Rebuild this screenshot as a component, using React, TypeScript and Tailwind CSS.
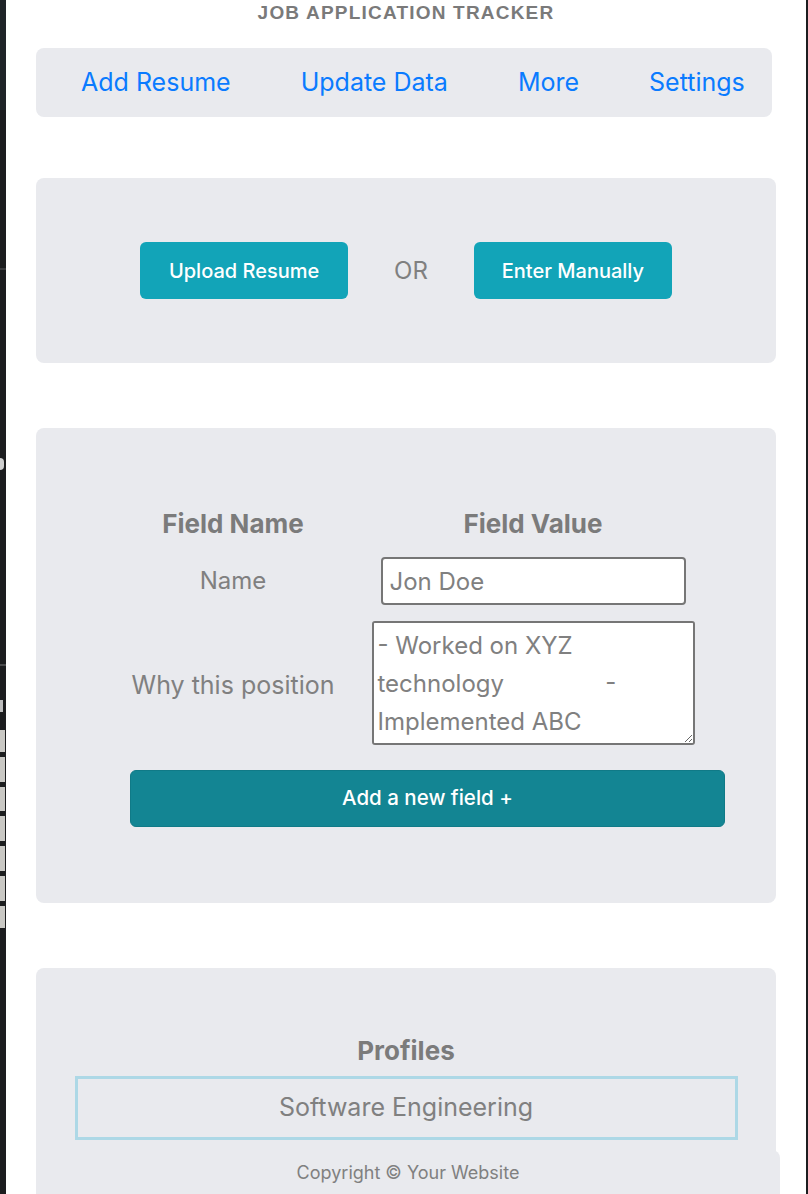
import { useState } from 'react'

/**
 * Job application tracker popup.
 *
 * Nav links on top, a resume entry choice, the field table and the profile list.
 * The footer sits fixed at the bottom of the popup.
 */

const font = { fontFamily: 'Inter, "Noto Sans", sans-serif' }

function NavBar() {
  const links = ['Add Resume', 'Update Data', 'More', 'Settings']
  return (
    <nav className="mt-[22px] flex h-[69px] w-[736px] items-center gap-[70px] rounded-lg bg-[#e9eaee] pl-[45px]">
      {links.map((l) => (
        <a key={l} href="#" className="text-[25px] leading-none text-[#0a7bff]">
          {l}
        </a>
      ))}
    </nav>
  )
}

function ResumeChoice() {
  return (
    <section className="mt-[61px] flex h-[185px] w-[740px] items-center justify-center rounded-lg bg-[#e9eaee]">
      <button
        type="button"
        className="h-[57px] w-[208px] rounded-md bg-[#12a4b8] text-[20px] font-medium text-white"
      >
        Upload Resume
      </button>
      <span className="mx-[46px] text-[24px] text-[#808080]">OR</span>
      <button
        type="button"
        className="h-[57px] w-[198px] rounded-md bg-[#12a4b8] text-[20px] font-medium text-white"
      >
        Enter Manually
      </button>
    </section>
  )
}

function FieldTable() {
  const [name, setName] = useState('Jon Doe')
  const [why, setWhy] = useState(
    '- Worked on XYZ technology               - Implemented ABC'
  )
  return (
    <section className="mt-[65px] w-[740px] rounded-lg bg-[#e9eaee] pb-[76px] pt-[75px]">
      <div className="ml-[94px] grid w-[600px] grid-cols-[206px_394px] items-center">
        <div className="flex h-[40px] items-center justify-center text-[26px] font-bold text-[#7b7b7b]">
          Field Name
        </div>
        <div className="flex h-[40px] items-center justify-center text-[26px] font-bold text-[#7b7b7b]">
          Field Value
        </div>

        <div className="mt-[14px] text-center text-[24px] text-[#808080]">Name</div>
        <div className="mt-[14px] flex justify-center">
          <input
            value={name}
            onChange={(e) => setName(e.target.value)}
            className="h-[48px] w-[305px] rounded-[4px] border-2 border-[#767676] bg-white px-[7px] text-[24px] text-[#808080] outline-none"
            style={font}
          />
        </div>

        <div className="mt-[22px] text-center text-[25px] text-[#808080]">Why this position</div>
        <div className="mt-[16px] flex justify-center">
          <textarea
            value={why}
            onChange={(e) => setWhy(e.target.value)}
            className="h-[124px] w-[323px] rounded-[3px] border-2 border-[#767676] bg-white px-[4px] py-[4px] text-[24px] leading-[38px] text-[#808080] outline-none"
            style={font}
          />
        </div>
      </div>
      <button
        type="button"
        className="ml-[94px] mt-[25px] h-[57px] w-[595px] rounded-md border border-[#107a87] bg-[#138593] text-[20.5px] font-medium text-white"
      >
        Add a new field +
      </button>
    </section>
  )
}

function Profiles() {
  return (
    <section className="mt-[65px] w-[740px] rounded-lg bg-[#e9eaee] pb-[80px] pt-[66px]">
      <h2 className="text-center text-[26px] font-bold leading-[34px] text-[#7b7b7b]">Profiles</h2>
      <div className="mx-auto mt-[8px] flex h-[64px] w-[663px] items-center justify-center border-[3px] border-[#add8e6] text-[25px] text-[#808080]">
        Software Engineering
      </div>
      <div className="h-[200px]" />
    </section>
  )
}

export default function App() {
  return (
    <div className="flex min-h-screen bg-[#1c1d1f]" style={font}>
      {/* strip of the window behind the popup */}
      <div className="relative w-[6px] shrink-0 bg-[#1c1d1f]">
        <div className="h-[110px] bg-[#1f2428]" />
        <div className="absolute left-0 top-[268px] h-[2px] w-[6px] bg-[#3a3b3d]" />
        <div className="absolute left-0 top-[458px] h-[12px] w-[4px] rounded-r bg-[#cfcfcf]" />
        <div className="absolute left-0 top-[664px] h-[2px] w-[6px] bg-[#4a4b4d]" />
        <div className="absolute left-0 top-[700px] h-[12px] w-[3px] bg-[#bdbdbd]" />
        <div className="absolute left-0 top-[730px] flex w-[5px] flex-col gap-[5px]">
          <div className="h-[22px] bg-[#c9c8c4]" />
          <div className="h-[25px] bg-[#c9c8c4]" />
          <div className="h-[24px] bg-[#c9c8c4]" />
          <div className="h-[25px] bg-[#c9c8c4]" />
          <div className="h-[25px] bg-[#c9c8c4]" />
          <div className="h-[25px] bg-[#c9c8c4]" />
          <div className="h-[22px] bg-[#c9c8c4]" />
        </div>
      </div>

      <div className="relative w-[800px] shrink-0 bg-white pl-[30px]">
        <h1
          className="w-[740px] text-center text-[19px] font-bold uppercase leading-[26px] tracking-[1.2px] text-[#7a7a7a]"
          style={{ fontFamily: '"Liberation Sans", Arial, sans-serif' }}
        >
          Job Application Tracker
        </h1>
        <NavBar />
        <ResumeChoice />
        <FieldTable />
        <Profiles />

        <footer className="fixed bottom-0 left-[36px] flex h-[44px] w-[744px] items-center justify-center rounded-tr-lg bg-[#e9eaee] text-[18px] text-[#808080]">
          Copyright © Your Website
        </footer>
      </div>

      <div className="flex-1 bg-[#1c1d1f]" />
    </div>
  )
}
